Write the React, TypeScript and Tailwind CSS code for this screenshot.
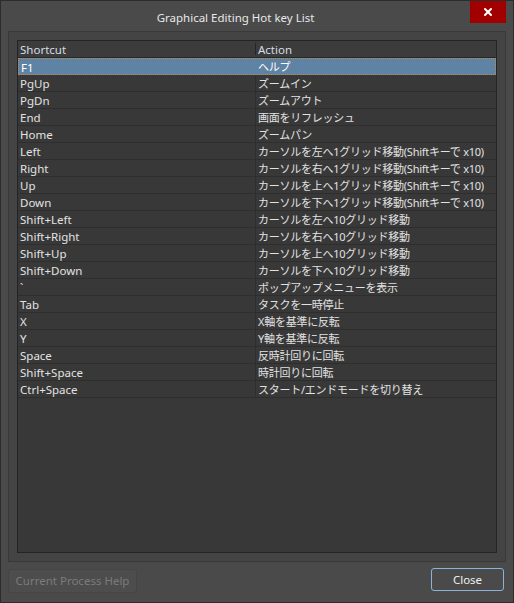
import { X } from "lucide-react";

const rows: [string, string][] = [
  ["F1", "ヘルプ"],
  ["PgUp", "ズームイン"],
  ["PgDn", "ズームアウト"],
  ["End", "画面をリフレッシュ"],
  ["Home", "ズームパン"],
  ["Left", "カーソルを左へ1グリッド移動(Shiftキーで x10)"],
  ["Right", "カーソルを右へ1グリッド移動(Shiftキーで x10)"],
  ["Up", "カーソルを上へ1グリッド移動(Shiftキーで x10)"],
  ["Down", "カーソルを下へ1グリッド移動(Shiftキーで x10)"],
  ["Shift+Left", "カーソルを左へ10グリッド移動"],
  ["Shift+Right", "カーソルを右へ10グリッド移動"],
  ["Shift+Up", "カーソルを上へ10グリッド移動"],
  ["Shift+Down", "カーソルを下へ10グリッド移動"],
  ["`", "ポップアップメニューを表示"],
  ["Tab", "タスクを一時停止"],
  ["X", "X軸を基準に反転"],
  ["Y", "Y軸を基準に反転"],
  ["Space", "反時計回りに回転"],
  ["Shift+Space", "時計回りに回転"],
  ["Ctrl+Space", "スタート/エンドモードを切り替え"],
];

const font = "font-['Noto_Sans','Noto_Sans_CJK_JP',sans-serif]";

export default function App() {
  return (
    <div
      className={`w-[514px] h-[603px] bg-[#4a4a4a] border border-[#2c2c2c] flex flex-col text-[#e2e2e2] ${font}`}
    >
      {/* Title bar */}
      <div className="h-[30px] shrink-0 flex items-start pr-[7px]">
        <span className="flex-1 text-center text-[11.5px] leading-none pt-[11px] text-[#e8e8e8]">
          Graphical Editing Hot key List
        </span>
        <button className="w-[36px] h-[22px] bg-[#a00000] flex items-center justify-center">
          <X className="w-[12px] h-[12px] text-white" strokeWidth={4} />
        </button>
      </div>

      {/* Group box */}
      <div className="mx-[7px] h-[531px] shrink-0 border border-[#393939] bg-[#444444] p-[8px] flex">
        <div className="flex-1 border border-[#242424] bg-[#383838] flex flex-col">
          <div className="h-[17px] shrink-0 flex bg-[#3c3c3c] border-b border-[#262626] text-[11.5px] text-[#d6dce4]">
            <div className="w-[238px] pl-[2px] border-r border-[#262626] my-[2px] leading-[13px]">
              Shortcut
            </div>
            <div className="flex-1 pl-[2px] my-[2px] leading-[13px]">Action</div>
          </div>
          {rows.map(([k, a], i) => (
            <div
              key={i}
              className={`h-[17px] shrink-0 flex ${
                i === 0
                  ? "bg-[#5f83a4] border border-dotted border-[#c08a4a] text-white"
                  : "border-b border-[#2e2e2e]"
              }`}
            >
              <div
                className={`w-[238px] pl-[2px] text-[11.5px] leading-[17px] ${
                  i === 0 ? "-ml-[1px] pl-[3px] leading-[15px]" : "border-r border-[#2e2e2e]"
                }`}
              >
                {k}
              </div>
              <div
                className={`flex-1 pl-[2px] text-[11px] tracking-[-0.25px] whitespace-nowrap ${
                  i === 0 ? "leading-[15px]" : "leading-[17px]"
                }`}
              >
                {a}
              </div>
            </div>
          ))}
        </div>
      </div>

      {/* Buttons */}
      <div className="flex justify-between items-start pl-[7px] pr-[9px] pt-[7px]">
        <button className="w-[129px] h-[24px] rounded-[3px] border border-[#454545] bg-[#4d4d4d] text-[11.5px] text-[#7b7b7b]">
          Current Process Help
        </button>
        <button className="w-[73px] h-[23px] -mt-[1px] rounded-[3px] border border-[#8cb2da] bg-[#4a4a4a] text-[11.5px] text-[#f0f0f0]">
          Close
        </button>
      </div>
    </div>
  );
}
